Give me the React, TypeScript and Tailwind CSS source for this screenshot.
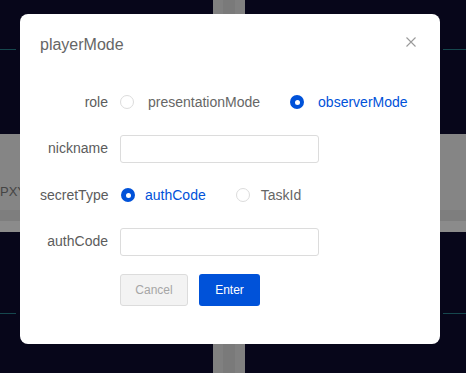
import React from "react";

const font = { fontFamily: '"Liberation Sans", Arial, sans-serif' };

function Radio({ checked, label, gap }: { checked: boolean; label: string; gap: string }) {
  return (
    <label className={`flex items-center ${gap}`}>
      {checked ? (
        <span className="flex h-[14px] w-[14px] shrink-0 items-center justify-center rounded-full bg-[#0052d9]">
          <span className="h-[5px] w-[5px] rounded-full bg-white" />
        </span>
      ) : (
        <span className="h-[14px] w-[14px] shrink-0 rounded-full border border-[#dcdcdc] bg-white" />
      )}
      <span className={`text-[14px] leading-5 whitespace-nowrap ${checked ? "text-[#0052d9]" : "text-[#666]"}`}>{label}</span>
    </label>
  );
}

function Row({ label, children }: { label: string; children: React.ReactNode }) {
  return (
    <div className="flex h-7 items-center gap-[12px]">
      <span className="w-[68px] shrink-0 whitespace-nowrap text-right text-[14px] text-[#5c5c5c]">{label}</span>
      {children}
    </div>
  );
}

export default function App() {
  return (
    <div className="relative h-[373px] w-[466px] overflow-hidden bg-[#07061a]" style={font}>
      {/* backdrop bits */}
      <div className="absolute left-0 top-[49px] h-px w-[16px] bg-[#16474e]" />
      <div className="absolute right-0 top-[49px] h-px w-[23px] bg-[#16474e]" />
      <div className="absolute left-0 top-[313px] h-px w-[16px] bg-[#16474e]" />
      <div className="absolute right-0 top-[313px] h-px w-[23px] bg-[#16474e]" />
      <div className="absolute left-0 top-[134px] flex h-[98px] w-full flex-col">
        <div className="flex h-[76px] items-center bg-[#858585]">
          <span className="mt-[40px] text-[13px] text-[#444]">PXY</span>
        </div>
        <div className="h-[11px] bg-[#7e7e7e]" />
        <div className="h-[11px] bg-[#8b8b8b]" />
      </div>
      <div className="absolute left-[213px] top-0 flex h-full w-[32px]">
        <div className="w-[10px] bg-[#808080]" />
        <div className="w-[12px] bg-[#7a7a7a]" />
        <div className="w-[10px] bg-[#808080]" />
      </div>

      {/* modal */}
      <div className="absolute left-[20px] top-[14px] h-[330px] w-[420px] rounded-[8px] bg-white px-5 pt-[19px]">
        <div className="flex items-start justify-between">
          <span className="text-[16px] leading-6 text-[#666]">playerMode</span>
          <svg className="mr-[4px] mt-[4px]" width="10" height="10" viewBox="0 0 10 10">
            <path d="M0.5 0.5L9.5 9.5M9.5 0.5L0.5 9.5" stroke="#9a9a9a" strokeWidth="1.1" fill="none" />
          </svg>
        </div>

        <div className="mt-[31px] flex flex-col gap-[18.6px]">
          <Row label="role">
            <div className="flex items-center gap-[30px]">
              <Radio checked={false} label="presentationMode" gap="gap-[14px]" />
              <Radio checked label="observerMode" gap="gap-[14px]" />
            </div>
          </Row>
          <Row label="nickname">
            <input className="h-7 w-[199px] rounded-[3px] border border-[#dcdcdc] px-2 text-[14px] outline-none" />
          </Row>
          <Row label="secretType">
            <div className="ml-px flex items-center gap-[30px]">
              <Radio checked label="authCode" gap="gap-[10px]" />
              <Radio checked={false} label="TaskId" gap="gap-[11px]" />
            </div>
          </Row>
          <Row label="authCode">
            <input className="h-7 w-[199px] rounded-[3px] border border-[#dcdcdc] px-2 text-[14px] outline-none" />
          </Row>
          <div className="flex gap-[11px] pl-[80px]">
            <button className="h-8 w-[68px] rounded-[3px] border border-[#dcdcdc] bg-[#f3f3f3] text-[12px] text-[#a6a6a6]">
              Cancel
            </button>
            <button className="h-8 w-[61px] rounded-[3px] bg-[#0052d9] text-[12px] text-white">Enter</button>
          </div>
        </div>
      </div>
    </div>
  );
}
